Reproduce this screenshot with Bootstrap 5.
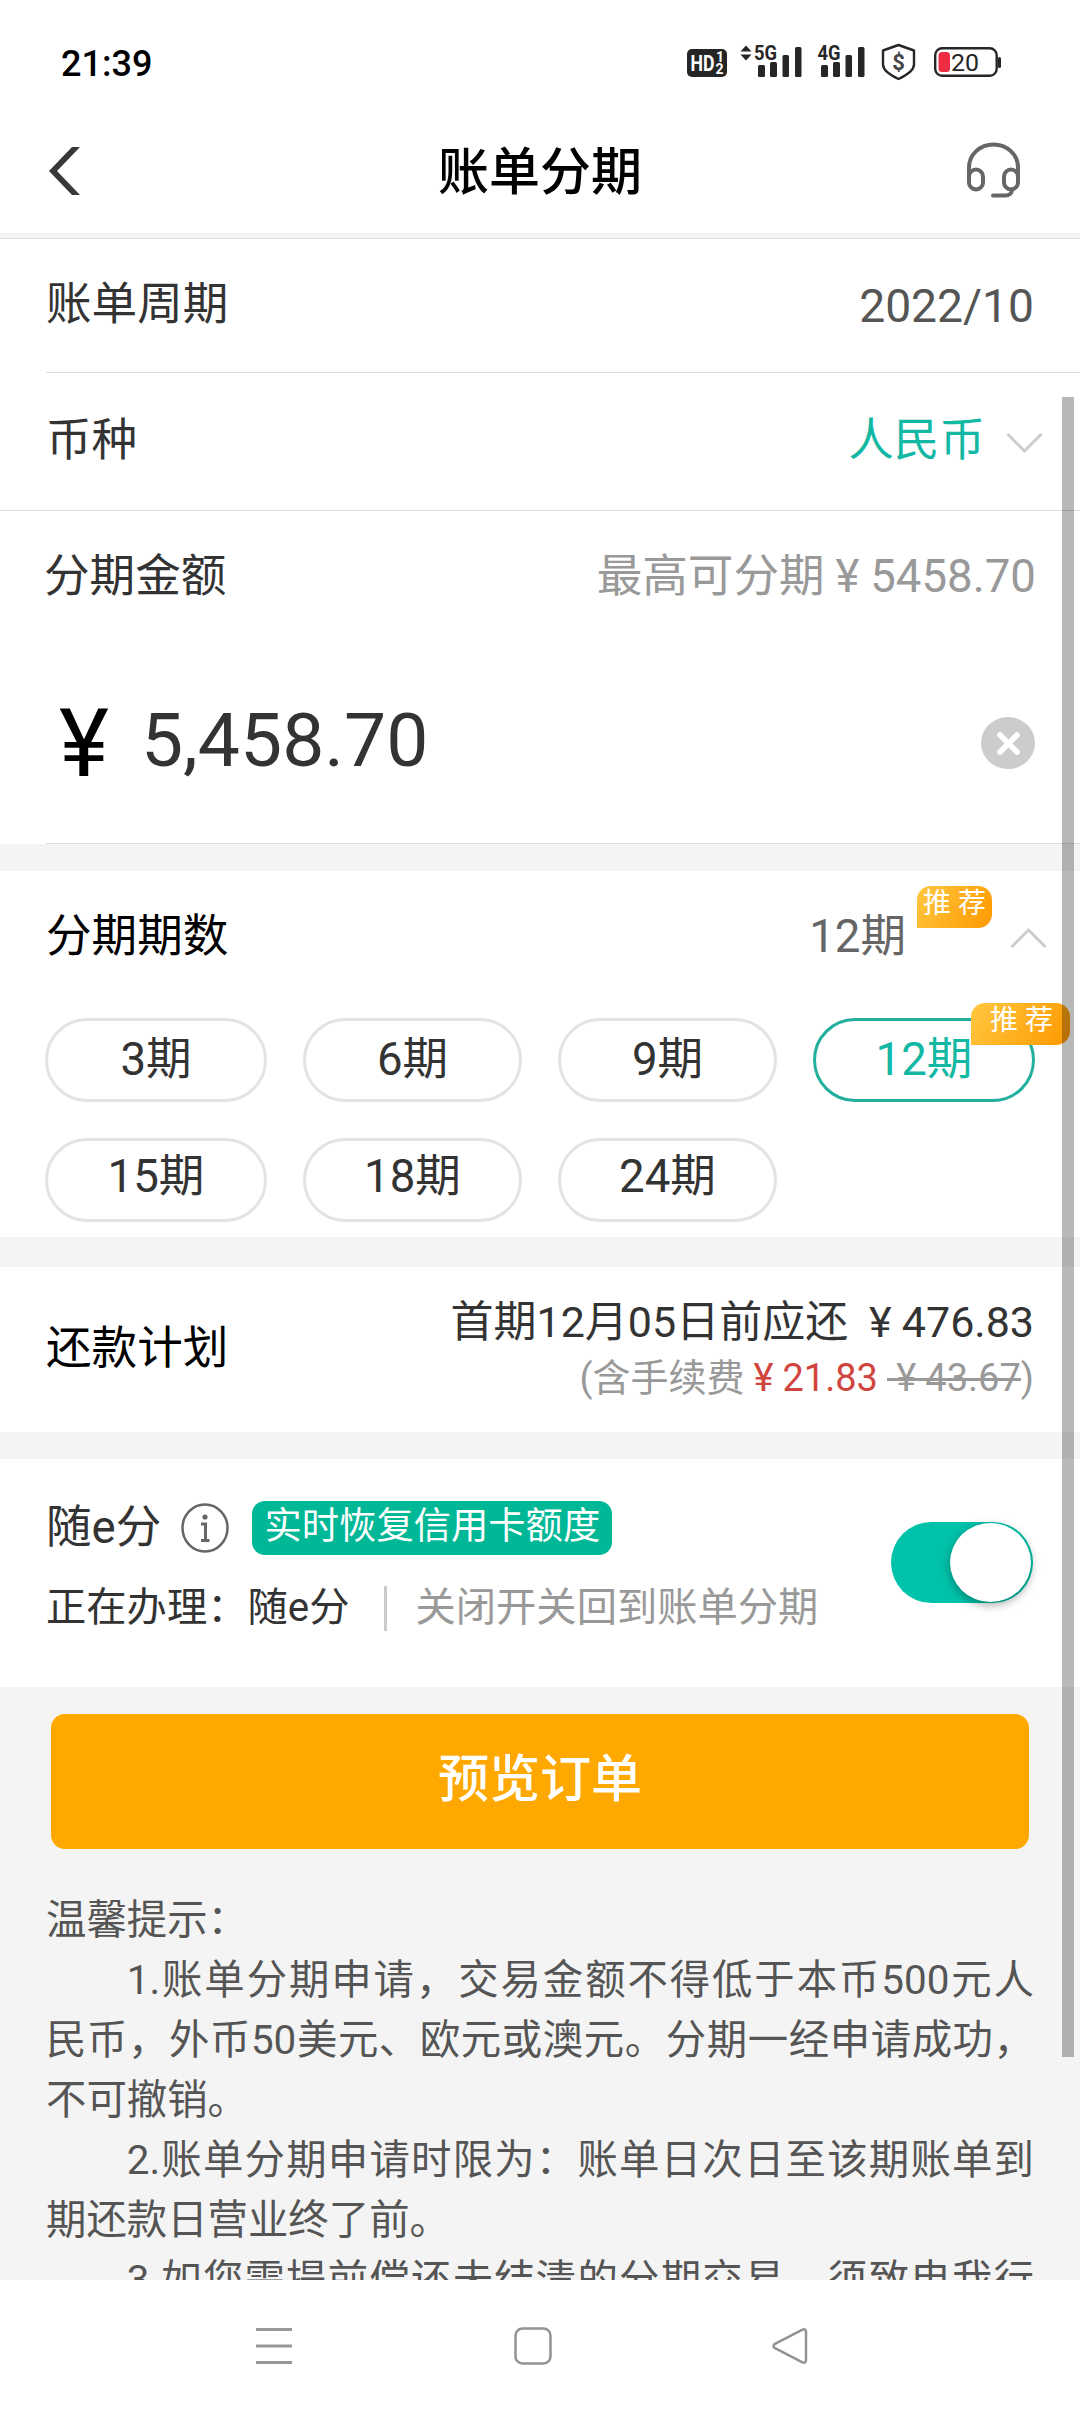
<!DOCTYPE html>
<html lang="zh-CN">
<head>
<meta charset="utf-8">
<meta name="viewport" content="width=device-width, initial-scale=1">
<title>账单分期</title>
<link href="https://cdn.jsdelivr.net/npm/bootstrap@5.3.0/dist/css/bootstrap.min.css" rel="stylesheet">
<style>
body{width:1080px;height:2412px;overflow:hidden;background:#fff;font-family:Roboto,"Noto Sans CJK SC",sans-serif;font-size:45.6px;line-height:1.2;color:#333}
svg{display:block;flex:none}
svg text{font-family:Roboto,sans-serif}
.status{height:124px;padding:0 79px 0 61px}
.clock{font-size:36px;font-weight:500;color:#000;padding-top:5px}
.topbar{height:109px;padding:0 59px 16px 48px}
.title{font-size:51px;font-weight:500;color:#000;line-height:1;padding:4px 0 0 11px}
.rule{height:6px;background:#f3f3f3;border-bottom:1px solid #dcdcdc}
.line-row{padding:0 46px}
.cycle{height:133px}
.cycle .gray5{font-size:46.2px;padding-top:2px}
.hair{height:1px;background:#dcdcdc}
.inset{margin-left:46px}
.ccy{height:137px;padding-right:37px}
.ccy svg{margin:4px 0 0 21px}
.teal{color:#12b8a3}
.gray5{color:#555}.gray6{color:#666}.gray9{color:#999}.black{color:#000}
.limit{height:132px;padding:0 44px}
.yuan{padding:0 .237em}
.amount{height:200px;padding:0 45px 0 59px}
.yen{font-size:95px;line-height:1}
.figure-lg{font-size:75px;line-height:1;margin:0 0 6px 32px}
.band{background:#f4f4f4}
.tag-hot{height:42px;border-radius:14px 14px 14px 0;background:linear-gradient(120deg,#ffc740,#ff9900);color:#fff;font-size:28px;line-height:36px;white-space:nowrap}
.periods{height:366px}
.periods-head{height:131px;padding-right:33px;padding-top:2px}
.periods-head .tag-hot{width:75px;margin:-61px 18px 0 12px;text-align:center}
.periods-head .gray6{margin-right:-1px}
.pill-grid{display:grid;grid-template-columns:222px 219px 219px 222px;justify-content:space-between;row-gap:36px;padding:16px 45px 0 45px}
.pill{height:84px;border:3px solid #e3e3e3;position:relative;line-height:1}
.pill.low{padding-bottom:6px}
.pill.on{border-color:#22b09d;color:#12b8a3}
.pill .tag-hot{position:absolute;left:155px;top:-18px;width:99px;padding-left:19px;text-align:left}
.plan{height:165px}
.plan .main-line{font-size:43px;line-height:56px}
.plan .fee{font-size:38px;line-height:56px}
.red{color:#d1453f}
.was{text-decoration:none;background:linear-gradient(#999,#999) 0 54%/100% 3px no-repeat}
.esplit{height:228px;padding-top:42px}
.e-head{height:54px}
.tag-green{background:#00b796;color:#fff;border-radius:13px;height:54px;width:360px;font-size:37.3px;line-height:50px;text-align:center;white-space:nowrap;margin-left:23px}
.e-foot{height:60px;margin-top:23px;font-size:40.3px;white-space:nowrap}
.bar{width:3px;height:45px;background:#ccc;margin:0 28px 0 35px}
.switcher{width:142px;height:81px;border-radius:41px;background:#00c2aa;margin:21px 1px 0 0}
.knob{width:81px;height:79px;border-radius:50%;background:#fff;margin-right:2px;box-shadow:0 3px 10px rgba(0,0,0,.35)}
.page-foot{height:593px;padding:27px 46px 0;overflow:hidden}
.cta{display:flex;width:978px;height:135px;margin:0 auto 42px 5px;border-radius:14px;background:#ffa800;color:#fff;font-size:51px;font-weight:500;padding-bottom:11px;line-height:1}
.tips{font-size:40.4px;line-height:60px;color:#555;text-align:justify}
.tips p{margin:0;text-indent:2em}
.tips .lead-line{text-indent:0}
.tips .full{text-align-last:justify}
.navkeys{height:132px;padding:0 272px 0 255px}
.scroller{position:absolute;left:1062px;top:397px;width:12px;height:1660px;background:rgba(0,0,0,.28)}
</style>
<script src="https://cdn.jsdelivr.net/npm/bootstrap@5.3.0/dist/js/bootstrap.bundle.min.js"></script>
</head>
<body class="position-relative">
<header>
  <div class="status d-flex align-items-center justify-content-between">
    <span class="clock">21:39</span>
    <svg width="315" height="40" viewBox="686 42 315 40" fill="#262626">
      <rect x="687" y="49" width="40" height="28" rx="5"/>
      <text x="690.5" y="71" font-size="22" font-weight="700" fill="#fff" textLength="24" lengthAdjust="spacingAndGlyphs">HD</text>
      <text x="716" y="62" font-size="14" font-weight="700" fill="#fff">1</text>
      <text x="715.5" y="74" font-size="14" font-weight="700" fill="#fff">2</text>
      <path d="M746 45.500l5.500 6h-11zM746 60.500l5.500-6h-11z"/>
      <text x="754" y="60" font-size="21" font-weight="700" textLength="23" lengthAdjust="spacingAndGlyphs">5G</text>
      <rect x="758" y="65" width="7" height="12" rx="1.500"/><rect x="770" y="62" width="7" height="15" rx="1.500"/><rect x="782.500" y="55" width="6.500" height="22" rx="1.500"/><rect x="795" y="47" width="6.500" height="30" rx="1.500"/>
      <text x="817.5" y="60" font-size="21" font-weight="700" textLength="23" lengthAdjust="spacingAndGlyphs">4G</text>
      <rect x="821" y="65" width="7" height="12" rx="1.500"/><rect x="833" y="62" width="7" height="15" rx="1.500"/><rect x="845.500" y="55" width="6.500" height="22" rx="1.500"/><rect x="858" y="47" width="6.500" height="30" rx="1.500"/>
      <path d="M898.500 45l15.500 5.500v14c0 6.500-8 11-15.500 14.500-7.500-3.500-15.500-8-15.500-14.500v-14z" fill="none" stroke="#262626" stroke-width="2.400" stroke-linejoin="round"/>
      <text x="898.500" y="70" font-size="22" font-weight="700" text-anchor="middle" fill="#444">$</text>
      <rect x="935.200" y="48.200" width="61.500" height="27.600" rx="7" fill="none" stroke="#262626" stroke-width="2.400"/>
      <rect x="938.500" y="52" width="11.500" height="20" rx="3.500" fill="#ee2d42"/>
      <text x="951" y="70.500" font-size="24" textLength="28" lengthAdjust="spacingAndGlyphs">20</text>
      <rect x="998" y="57" width="3" height="11" rx="1.500"/>
    </svg>
  </div>
  <nav class="topbar d-flex align-items-center justify-content-between" aria-label="标题栏">
    <svg width="54" height="50" viewBox="0 0 54 50"><path d="M1 25L24 1h8L9 25l23 24h-8z" fill="#383838"/></svg>
    <h1 class="title m-0">账单分期</h1>
    <svg width="54" height="58" viewBox="967 141.500 54 58" fill="none" stroke="#666" stroke-width="4" stroke-linecap="round">
      <path d="M969 176v-9c0-13 11-23 24.500-23s24.500 10 24.500 23v9"/>
      <rect x="969" y="169" width="14" height="20" rx="7"/><rect x="1004" y="169" width="14" height="20" rx="7"/>
      <path d="M1012 189c0 4-3 6-6.500 6H993"/>
    </svg>
  </nav>
  <div class="rule"></div>
</header>

<main>
  <div class="line-row cycle d-flex align-items-center justify-content-between">
    <span>账单周期</span><span class="gray5">2022/10</span>
  </div>
  <div class="hair inset"></div>
  <div class="line-row ccy d-flex align-items-center justify-content-between">
    <span>币种</span>
    <span class="teal d-flex align-items-center">人民币
      <svg width="37" height="22" viewBox="0 0 37 22" fill="none" stroke="#ccc" stroke-width="3"><path d="M1.500 2l17 17 17-17"/></svg>
    </span>
  </div>
  <div class="hair"></div>
  <div class="limit d-flex align-items-center justify-content-between">
    <span>分期金额</span><span class="gray9">最高可分期<span class="yuan">¥</span>5458.70</span>
  </div>
  <div class="amount d-flex align-items-center">
    <span class="yen black">¥</span><span class="figure-lg">5,458.70</span>
    <svg class="ms-auto" width="54" height="52" viewBox="0 0 54 52"><ellipse cx="27" cy="26" rx="27" ry="26" fill="#ccc"/><path d="M19 18l17 17M36 18L19 35" stroke="#fff" stroke-width="5.500" stroke-linecap="round"/></svg>
  </div>
  <div class="hair inset"></div>
  <div class="band" style="height:27px"></div>

  <section class="periods">
    <div class="periods-head line-row d-flex align-items-center">
      <span class="black me-auto">分期期数</span>
      <span class="gray6">12期</span>
      <span class="tag-hot">推 荐</span>
      <svg width="37" height="22" viewBox="0 0 37 22" fill="none" stroke="#ccc" stroke-width="3"><path d="M1.500 20l17-17 17 17"/></svg>
    </div>
    <div class="pill-grid">
      <div class="pill rounded-pill d-flex align-items-center justify-content-center">3期</div>
      <div class="pill rounded-pill d-flex align-items-center justify-content-center">6期</div>
      <div class="pill rounded-pill d-flex align-items-center justify-content-center">9期</div>
      <div class="pill on rounded-pill d-flex align-items-center justify-content-center">12期<span class="tag-hot">推 荐</span></div>
      <div class="pill low rounded-pill d-flex align-items-center justify-content-center">15期</div>
      <div class="pill low rounded-pill d-flex align-items-center justify-content-center">18期</div>
      <div class="pill low rounded-pill d-flex align-items-center justify-content-center">24期</div>
    </div>
  </section>
  <div class="band" style="height:30px"></div>

  <section class="plan line-row d-flex align-items-center justify-content-between">
    <span class="black">还款计划</span>
    <div class="text-end">
      <div class="main-line">首期12月05日前应还 <span class="yuan">¥</span>476.83</div>
      <div class="fee gray9">(含手续费<span class="red"><span class="yuan">¥</span>21.83</span> <s class="was"><span class="yuan">¥</span>43.67</s>)</div>
    </div>
  </section>
  <div class="band" style="height:27px"></div>

  <section class="esplit line-row d-flex justify-content-between align-items-start">
    <div>
      <div class="e-head d-flex align-items-center">
        <span>随e分</span>
        <svg style="margin-left:20px" width="48" height="50" viewBox="0 0 48 50" fill="none" stroke="#666"><ellipse cx="24" cy="25" rx="22.500" ry="23.500" stroke-width="2.500"/><circle cx="24" cy="14" r="2.600" fill="#666" stroke="none"/><path d="M20 21h4.500v16M20 37.500h8.500" stroke-width="3"/></svg>
        <span class="tag-green">实时恢复信用卡额度</span>
      </div>
      <div class="e-foot d-flex align-items-center">
        <span>正在办理：随e分</span><span class="bar"></span><span class="gray9">关闭开关回到账单分期</span>
      </div>
    </div>
    <div class="switcher d-flex align-items-center justify-content-end" role="switch" aria-checked="true"><span class="knob"></span></div>
  </section>

  <section class="page-foot band">
    <button type="button" class="cta btn border-0 align-items-center justify-content-center">预览订单</button>
    <div class="tips">
      <p class="lead-line">温馨提示：</p>
      <p>1.账单分期申请，交易金额不得低于本币500元人民币，外币50美元、欧元或澳元。分期一经申请成功，不可撤销。</p>
      <p>2.账单分期申请时限为：账单日次日至该期账单到期还款日营业终了前。</p>
      <p class="full">3.如您需提前偿还未结清的分期交易，须致电我行</p>
    </div>
  </section>
</main>

<footer class="navkeys d-flex align-items-center justify-content-between bg-white">
  <svg width="38" height="38" viewBox="0 0 38 38" stroke="#999" stroke-width="3"><path d="M1 2.500h36M1 19h36M1 35.500h36"/></svg>
  <svg width="38" height="38" viewBox="0 0 38 38" fill="none" stroke="#939393" stroke-width="2.500"><rect x="1.500" y="1.500" width="35" height="35" rx="7"/></svg>
  <svg width="36" height="38" viewBox="0 0 36 38" fill="none" stroke="#939393" stroke-width="2.500" stroke-linejoin="round"><path d="M2.500 17.200L30 2.800q4-1.500 4 2v28.400q0 3.500-4 2L2.500 20.800q-2-1.800 0-3.600z"/></svg>
</footer>
<div class="scroller"></div>
</body>
</html>
